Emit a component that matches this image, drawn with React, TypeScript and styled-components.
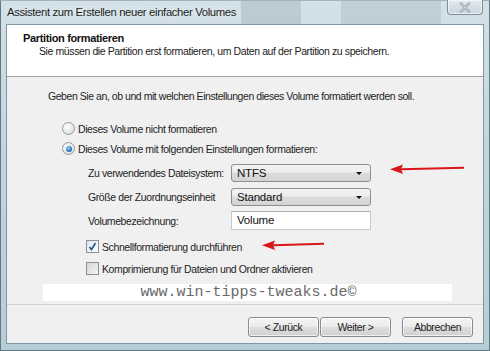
import React from "react";
import styled, { createGlobalStyle } from "styled-components";

const GlobalStyle = createGlobalStyle`
  html, body {
    margin: 0;
    padding: 0;
    background: #c8d8df;
  }
  body {
    font-family: "Liberation Sans", Arial, sans-serif;
    font-size: 10.5px;
    letter-spacing: -0.4px;
    color: #1e1e1e;
  }
`;

export default function App() {
  return (
    <>
      <GlobalStyle />
      <Window>
        <TitleBar>
          <TitleText>Assistent zum Erstellen neuer einfacher Volumes</TitleText>
          <CloseButton>
            <svg width="12" height="11" viewBox="0 0 12 11">
              <path
                d="M2 1.5 L10 9.5 M10 1.5 L2 9.5"
                stroke="#8d969b"
                strokeWidth="2.4"
                strokeLinecap="round"
              />
              <path
                d="M2 1.5 L10 9.5 M10 1.5 L2 9.5"
                stroke="#eef2f4"
                strokeWidth="1"
                strokeLinecap="round"
              />
            </svg>
          </CloseButton>
        </TitleBar>

        <Client>
          <Header>
            <HeaderTitle>Partition formatieren</HeaderTitle>
            <HeaderSub>
              Sie müssen die Partition erst formatieren, um Daten auf der Partition zu speichern.
            </HeaderSub>
          </Header>

          <Body>
            <Intro>
              Geben Sie an, ob und mit welchen Einstellungen dieses Volume formatiert werden soll.
            </Intro>

            <OptionRow $top={20}>
              <Radio />
              <span>Dieses Volume nicht formatieren</span>
            </OptionRow>
            <OptionRow $top={7}>
              <Radio $checked />
              <span>Dieses Volume mit folgenden Einstellungen formatieren:</span>
            </OptionRow>

            <FormGrid>
              <FieldLabel>Zu verwendendes Dateisystem:</FieldLabel>
              <Combo>
                <span>NTFS</span>
                <ComboArrow />
              </Combo>
              <FieldLabel>Größe der Zuordnungseinheit</FieldLabel>
              <Combo>
                <span>Standard</span>
                <ComboArrow />
              </Combo>
              <FieldLabel>Volumebezeichnung:</FieldLabel>
              <TextBox>Volume</TextBox>
            </FormGrid>

            <CheckRow $top={10}>
              <Checkbox $checked>
                <svg width="9" height="9" viewBox="0 0 9 9">
                  <path
                    d="M1.5 5 L3.5 7.5 L7.5 1"
                    stroke="#2a4f8c"
                    strokeWidth="1.6"
                    fill="none"
                  />
                </svg>
              </Checkbox>
              <span>Schnellformatierung durchführen</span>
            </CheckRow>
            <CheckRow $top={9}>
              <Checkbox />
              <span>Komprimierung für Dateien und Ordner aktivieren</span>
            </CheckRow>

            <Watermark>www.win-tipps-tweaks.de©</Watermark>

            <Arrow $left={380} $top={86} $width={80} />
            <Arrow $left={252} $top={162} $width={68} />
          </Body>

          <Footer>
            <ButtonGroup>
              <WizardButton>&lt; Zurück</WizardButton>
              <WizardButton>Weiter &gt;</WizardButton>
            </ButtonGroup>
            <WizardButton>Abbrechen</WizardButton>
          </Footer>
        </Client>
      </Window>
    </>
  );
}

function Arrow({ $left, $top, $width }: { $left: number; $top: number; $width: number }) {
  return (
    <ArrowBox style={{ left: $left, top: $top, width: $width }}>
      <svg width={$width} height="12" viewBox={`0 0 ${$width} 12`}>
        <defs>
          <filter id={`blur${$left}`} x="-10%" y="-50%" width="120%" height="200%">
            <feGaussianBlur stdDeviation="0.6" />
          </filter>
        </defs>
        <g filter={`url(#blur${$left})`}>
          <path
            d={`M14 5.2 L${$width - 3} 3.8 L${$width - 3} 5.8 L14 7.2 Z`}
            fill="#d8161a"
          />
          <path d="M3 6.3 L16 1.5 L14 6.3 L16 11 Z" fill="#d8161a" />
        </g>
      </svg>
    </ArrowBox>
  );
}

const Window = styled.div`
  width: 490px;
  height: 351px;
  box-sizing: border-box;
  display: flex;
  flex-direction: column;
  border: 1px solid #5f7a86;
  border-top-color: #9fb4bd;
  background:
    linear-gradient(90deg, rgba(255,255,255,0) 0 240px, rgba(120,140,150,0.25) 240px 300px, rgba(255,255,255,0) 300px 340px, rgba(120,140,150,0.2) 340px 440px, rgba(255,255,255,0) 440px) top / 100% 24px no-repeat,
    linear-gradient(180deg, #d3e1e7 0%, #c3d6de 40%, #b7ccd5 100%);
  padding: 0 5px 6px 5px;
`;

const TitleBar = styled.div`
  height: 23px;
  display: flex;
  align-items: flex-start;
  justify-content: space-between;
`;

const TitleText = styled.div`
  padding: 5px 0 0 1px;
  font-family: "Liberation Sans", Arial, sans-serif;
  font-size: 11.3px;
  letter-spacing: -0.35px;
  color: #1a1f22;
  text-shadow: 0 0 6px rgba(255, 255, 255, 0.9);
`;

const CloseButton = styled.div`
  width: 36px;
  height: 15px;
  margin-top: -1px;
  margin-right: 1px;
  box-sizing: border-box;
  border: 1px solid #7d8f98;
  border-top: none;
  border-radius: 0 0 4px 4px;
  background: linear-gradient(180deg, #e3ecf0 0%, #d3e0e6 50%, #c6d6dd 100%);
  box-shadow: inset 0 0 0 1px rgba(255, 255, 255, 0.6);
  display: flex;
  align-items: center;
  justify-content: center;
`;

const Client = styled.div`
  flex: 1;
  display: flex;
  flex-direction: column;
  border: 1px solid #7f97a2;
  background: #f0f0f0;
  position: relative;
`;

const Header = styled.div`
  height: 52px;
  box-sizing: border-box;
  background: #ffffff;
  border-bottom: 1px solid #a0a0a0;
  padding: 7px 0 0 16px;
`;

const HeaderTitle = styled.div`
  font-weight: bold;
  font-size: 11px;
  letter-spacing: -0.35px;
  color: #111;
`;

const HeaderSub = styled.div`
  padding: 1px 0 0 16px;
  color: #222;
`;

const Body = styled.div`
  flex: 1;
  position: relative;
  padding: 13px 0 0 41px;
  display: flex;
  flex-direction: column;
  align-items: flex-start;
`;

const Intro = styled.div`
  letter-spacing: -0.45px;
`;

const OptionRow = styled.div<{ $top: number }>`
  display: flex;
  align-items: center;
  gap: 3px;
  margin: ${(p) => p.$top}px 0 0 14px;
  height: 13px;
`;

const Radio = styled.span<{ $checked?: boolean }>`
  width: 11px;
  height: 11px;
  border-radius: 50%;
  border: 1px solid #9a9a9a;
  background: radial-gradient(circle at 40% 35%, #ffffff 0%, #e6e6e6 60%, #cfcfcf 100%);
  position: relative;
  flex-shrink: 0;
  &::after {
    content: "";
    display: ${(p) => (p.$checked ? "block" : "none")};
    position: absolute;
    left: 2.5px;
    top: 2.5px;
    width: 6px;
    height: 6px;
    border-radius: 50%;
    background: radial-gradient(circle at 40% 35%, #9fd4f7 0%, #2a7dc4 55%, #0b3f86 100%);
  }
`;

const FormGrid = styled.div`
  display: grid;
  grid-template-columns: 143px 140px;
  grid-auto-rows: 19px;
  row-gap: 5px;
  align-items: center;
  margin: 8px 0 0 40px;
`;

const FieldLabel = styled.div`
  white-space: nowrap;
  color: #222;
`;

const Combo = styled.div`
  height: 18px;
  box-sizing: border-box;
  border: 1px solid #8e8f8f;
  border-radius: 3px;
  background: linear-gradient(180deg, #f4f4f4 0%, #ececec 45%, #dcdcdc 50%, #d4d4d4 100%);
  display: flex;
  align-items: center;
  justify-content: space-between;
  padding: 0 8px 0 5px;
  font-size: 11.5px;
  letter-spacing: -0.2px;
  color: #111;
`;

const ComboArrow = styled.span`
  width: 0;
  height: 0;
  border-left: 3px solid transparent;
  border-right: 3px solid transparent;
  border-top: 3px solid #111;
  margin-top: 1px;
`;

const TextBox = styled.div`
  height: 19px;
  box-sizing: border-box;
  border: 1px solid #c8c8c8;
  border-top-color: #abadb3;
  background: #fff;
  padding: 2px 0 0 5px;
  font-size: 11.5px;
  letter-spacing: -0.2px;
  color: #111;
`;

const CheckRow = styled.div<{ $top: number }>`
  display: flex;
  align-items: center;
  gap: 3px;
  margin: ${(p) => p.$top}px 0 0 38px;
  height: 13px;
`;

const Checkbox = styled.span<{ $checked?: boolean }>`
  width: 11px;
  height: 11px;
  border: 1px solid #8f8f8f;
  background: ${(p) =>
    p.$checked
      ? "linear-gradient(135deg, #d9e6f5 0%, #ffffff 100%)"
      : "linear-gradient(135deg, #d6d6d6 0%, #f4f4f4 100%)"};
  display: flex;
  align-items: center;
  justify-content: center;
  flex-shrink: 0;
`;

const Watermark = styled.div`
  align-self: stretch;
  margin: 9px 31px 0 -5px;
  height: 17px;
  background: #ffffff;
  text-align: center;
  font-family: "Liberation Mono", "Courier New", monospace;
  font-size: 15px;
  letter-spacing: 0;
  line-height: 18px;
  color: #6a6a6a;
  padding-left: 2px;
`;

const ArrowBox = styled.div`
  position: absolute;
  height: 12px;
  pointer-events: none;
`;

const Footer = styled.div`
  height: 39px;
  box-sizing: border-box;
  border-top: 1px solid #d2d2d2;
  display: flex;
  justify-content: flex-end;
  align-items: flex-start;
  gap: 11px;
  padding: 12px 10px 0 0;
`;

const ButtonGroup = styled.div`
  display: flex;
  gap: 1px;
`;

const WizardButton = styled.div`
  width: 71px;
  height: 20px;
  box-sizing: border-box;
  border: 1px solid #8a8a8a;
  border-radius: 3px;
  background: linear-gradient(180deg, #f5f5f5 0%, #ebebeb 48%, #dddddd 52%, #d0d0d0 100%);
  box-shadow: inset 0 0 0 1px rgba(255, 255, 255, 0.7);
  display: flex;
  align-items: center;
  justify-content: center;
  color: #222;
`;
